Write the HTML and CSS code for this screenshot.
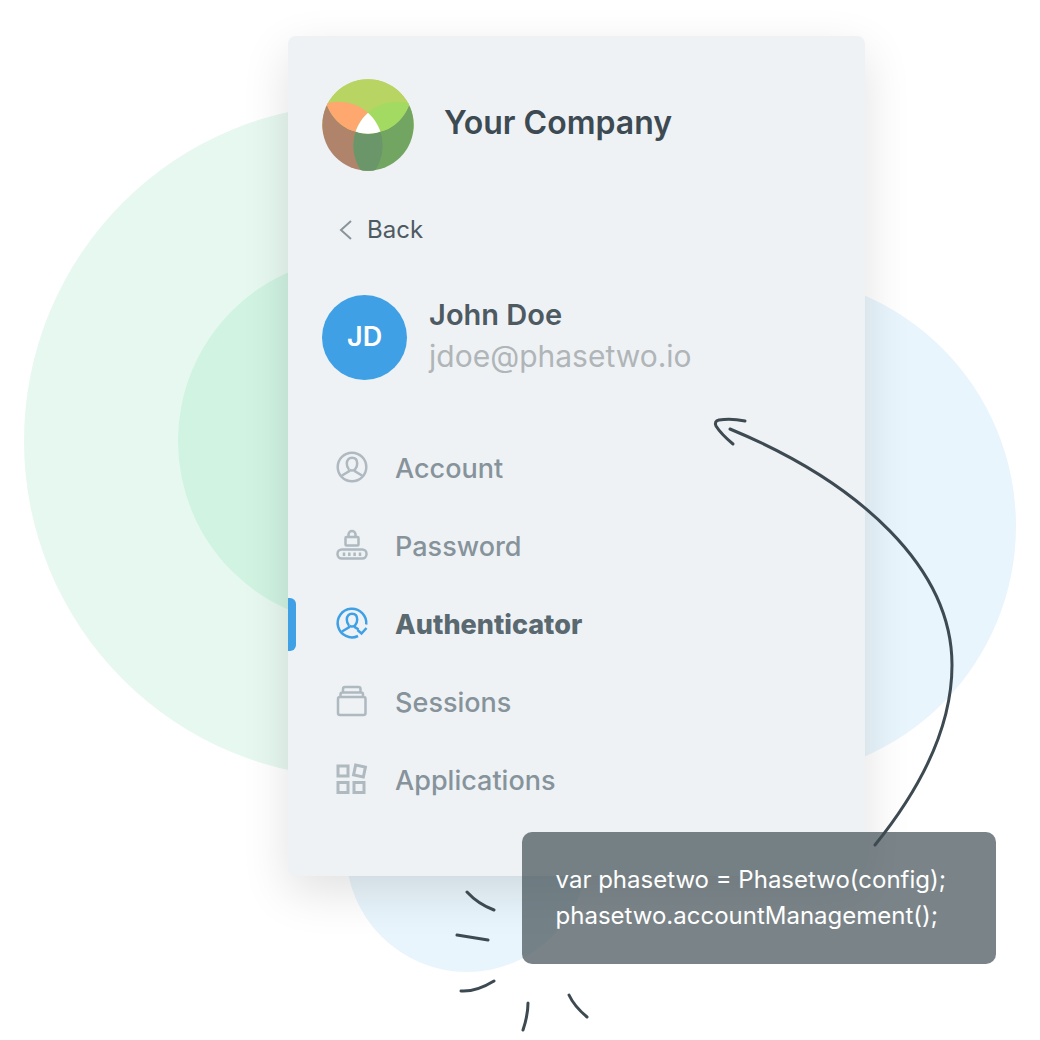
FILE: index.html
```html
<!DOCTYPE html>
<html lang="en">
<head>
<meta charset="utf-8">
<meta name="viewport" content="width=device-width, initial-scale=1">
<title>Your Company – Account</title>
<link rel="stylesheet" href="styles.css">
</head>
<body>
<main class="scene">
  <svg class="backdrop" viewBox="0 0 1040 1040" aria-hidden="true">
    <circle cx="361" cy="441" r="337" fill="#e7f8f0"/>
    <circle cx="362" cy="441" r="184" fill="#d0f3e2"/>
    <circle cx="765" cy="526" r="251" fill="#e9f5fc"/>
    <circle cx="467" cy="851" r="121" fill="#e9f5fc"/>
  </svg>

  <section class="card">
    <header class="brand">
      <svg class="logo" viewBox="0 0 92 92" aria-hidden="true">
        <defs>
          <clipPath id="disc"><circle cx="46" cy="46" r="45.7"/></clipPath>
          <clipPath id="top"><circle cx="46" cy="11" r="43.7"/></clipPath>
          <clipPath id="left"><circle cx="16.7" cy="66.7" r="44"/></clipPath>
        </defs>
        <g clip-path="url(#disc)">
          <rect width="92" height="50" fill="#b8d462"/>
          <circle cx="16.7" cy="66.7" r="44" fill="#b0836b"/>
          <circle cx="75.3" cy="66.7" r="44" fill="#73a562"/>
          <circle cx="46" cy="11" r="43.7" fill="#b8d462"/>
          <g clip-path="url(#left)">
            <circle cx="75.3" cy="66.7" r="44" fill="#6a9669"/>
            <circle cx="46" cy="11" r="43.7" fill="#fea76e"/>
          </g>
          <g clip-path="url(#top)">
            <circle cx="75.3" cy="66.7" r="44" fill="#a3da61"/>
            <g clip-path="url(#left)"><circle cx="75.3" cy="66.7" r="44" fill="#fff"/></g>
          </g>
        </g>
      </svg>
      <h1 class="brand-name">Your Company</h1>
    </header>

    <a class="back" href="#">
      <svg class="chevron" viewBox="0 0 14 20" aria-hidden="true"><path d="M12 1 2 10l10 9"/></svg>
      Back
    </a>

    <div class="profile">
      <div class="avatar">JD</div>
      <div>
        <h2 class="profile-name">John Doe</h2>
        <p class="profile-email">jdoe@phasetwo.io</p>
      </div>
    </div>

    <nav class="menu">
      <a class="menu-item" href="#">
        <svg class="icon" viewBox="0 0 32 32" aria-hidden="true">
          <circle cx="16" cy="15" r="14.3"/>
          <path d="M13 17.500c-1.400-1.300-2.200-3.400-2.200-6 0-3.600 2-5.700 5.200-5.700s5.200 2.100 5.200 5.700c0 2.600-.8 4.700-2.200 6v1.700l7 4.300M13 17.500v1.700l-7 4.300M13.500 17.800q2.500 1.600 5 0"/>
        </svg>
        Account
      </a>
      <a class="menu-item" href="#">
        <svg class="icon" viewBox="0 0 32 32" aria-hidden="true">
          <rect x="9.500" y="7" width="13" height="8.500" rx="1"/>
          <path d="M12.500 7V4.500a3.500 3.500 0 0 1 7 0V7"/>
          <rect x="1.500" y="19.500" width="29" height="9" rx="4.200"/>
          <path d="M8 22.500v3.500M13.300 22.500v3.500M18.600 22.500v3.500M24 22.500v3.500"/>
        </svg>
        Password
      </a>
      <a class="menu-item active" href="#" aria-current="page">
        <svg class="icon" viewBox="0 0 32 32" aria-hidden="true">
          <path d="M30.200 16.500A14.300 14.300 0 1 0 22 28"/>
          <path d="M13 17.500c-1.400-1.300-2.200-3.400-2.200-6 0-3.600 2-5.700 5.200-5.700s5.200 2.100 5.200 5.700c0 2.600-.8 4.700-2.200 6v1.700l3.500 2.200M13 17.500v1.700l-7 4.300M13.500 17.800q2.500 1.600 5 0"/>
          <path d="m21.500 22 4 3.500 5-5.500"/>
        </svg>
        Authenticator
      </a>
      <a class="menu-item" href="#">
        <svg class="icon" viewBox="0 0 32 32" aria-hidden="true">
          <rect x="2" y="11" width="27.500" height="18" rx="2"/>
          <path d="M4.500 10.500V8.500q0-2 2-2h18.500q2 0 2 2v2M7 6V3q0-2 2-2h13.500q2 0 2 2v3"/>
        </svg>
        Sessions
      </a>
      <a class="menu-item" href="#">
        <svg class="icon heavy" viewBox="0 0 32 32" aria-hidden="true">
          <rect x="2" y="2" width="10" height="10"/>
          <rect x="2" y="18.500" width="10" height="10"/>
          <rect x="18" y="18.500" width="10" height="10"/>
          <rect x="18.500" y="2" width="10" height="10" transform="rotate(12 23.500 7)"/>
        </svg>
        Applications
      </a>
    </nav>
  </section>

  <pre class="snippet"><code>var phasetwo = Phasetwo(config);
phasetwo.accountManagement();</code></pre>

  <svg class="strokes" viewBox="0 0 1040 1040" aria-hidden="true">
    <path d="M730 429C860 483 952 568 952 665C952 722 925 783 875 845"/>
    <path d="M745 421Q731 418 719 420Q714 421 716 426Q721 434 733 444"/>
    <path d="M467 892Q478 904 494 910M457 935 488 940M461 991Q476 992 494 981M528 1003Q528 1015 523 1030M569 995Q574 1006 587 1017"/>
  </svg>
</main>
</body>
</html>
```
FILE: styles.css
```css
* {
  box-sizing: border-box;
}

body {
  margin: 0;
  background: #fff;
  color: #3d4a52;
  font-family: Inter, "Liberation Sans", sans-serif;
}

h1,
h2,
p,
pre {
  margin: 0;
}

a {
  color: inherit;
  text-decoration: none;
}

.scene {
  position: relative;
  max-width: 1040px;
  min-height: 100vh;
  margin: 0 auto;
  padding-top: 36px;
}

.backdrop,
.strokes {
  position: absolute;
  top: 0;
  left: 0;
  width: 100%;
  pointer-events: none;
}

.strokes {
  fill: none;
  stroke: #3d4a52;
  stroke-width: 3;
  stroke-linecap: round;
  stroke-linejoin: round;
}

.card {
  position: relative;
  width: 55.5%;
  margin-left: 27.7%;
  padding: 43px 0 57px;
  border-radius: 8px;
  background: #eef2f5;
  box-shadow: 0 16px 48px rgba(0, 0, 0, 0.12);
}

.brand {
  display: flex;
  align-items: center;
  gap: 30px;
  padding: 0 34px;
}

.logo {
  width: 92px;
  height: 92px;
}

.brand-name {
  padding-bottom: 4px;
  font-size: 32px;
  line-height: 40px;
  font-weight: 600;
}

.back {
  display: inline-flex;
  align-items: center;
  gap: 14px;
  margin: 43px 0 0 51px;
  font-size: 24px;
  line-height: 32px;
  color: #4e5a62;
}

.chevron {
  width: 14px;
  height: 20px;
  fill: none;
  stroke: #8a949b;
  stroke-width: 2;
}

.profile {
  display: flex;
  align-items: flex-start;
  gap: 22px;
  margin-top: 49px;
  padding: 0 34px;
}

.avatar {
  display: grid;
  place-items: center;
  width: 85px;
  height: 85px;
  padding-bottom: 2px;
  border-radius: 50%;
  background: #3fa0e6;
  color: #fff;
  font-size: 27px;
  font-weight: 600;
}

.profile-name {
  font-size: 29px;
  line-height: 40px;
  font-weight: 600;
  color: #4e5a62;
}

.profile-email {
  font-size: 30px;
  line-height: 43px;
  color: #b0b5b8;
}

.menu {
  margin-top: 49px;
}

.menu-item {
  display: flex;
  align-items: center;
  gap: 27px;
  height: 78px;
  padding-left: 48px;
  font-size: 27px;
  font-weight: 500;
  color: #87939b;
}

.icon {
  width: 32px;
  height: 32px;
  overflow: visible;
  fill: none;
  stroke: #afb9c0;
  stroke-width: 2.500;
}

.heavy {
  stroke-width: 3;
}

.active {
  color: #5a6870;
  font-weight: 800;
}

.active::before {
  content: "";
  width: 8px;
  height: 53px;
  margin: 0 13px 0 -48px;
  border-radius: 0 6px 6px 0;
  background: #3fa0e6;
}

.active .icon {
  stroke: #3fa0e6;
}

.snippet {
  position: relative;
  width: fit-content;
  margin: -44px 44px 0 auto;
  padding: 30px 50px 30px 34px;
  border-radius: 10px;
  background: rgba(65, 80, 86, 0.7);
  color: #fff;
  font-size: 24px;
  line-height: 36px;
}

.snippet code {
  font-family: Inter, "Liberation Sans", sans-serif;
}
```
